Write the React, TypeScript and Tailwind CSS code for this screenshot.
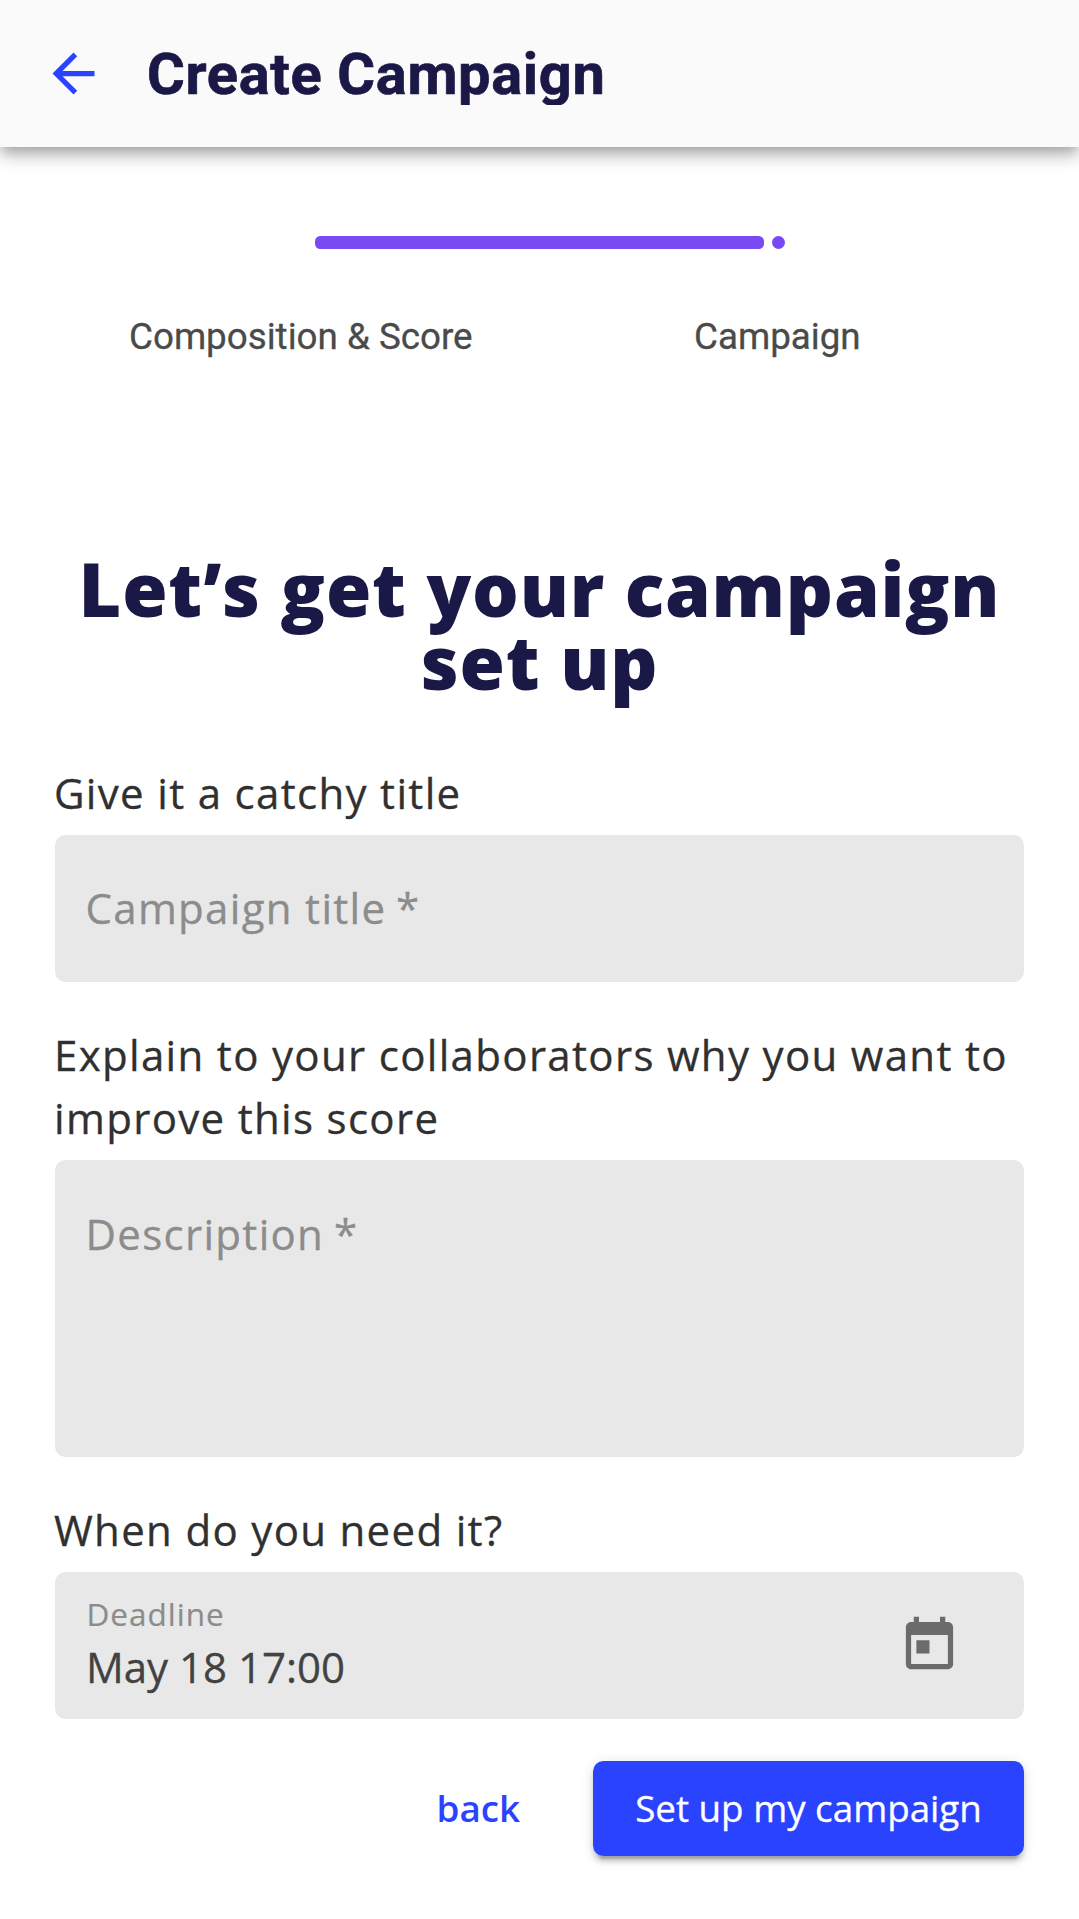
import React from "react";

function Question({ children }: { children: React.ReactNode }) {
  return (
    <p className="-ml-px text-[42px] leading-[63px] tracking-[1.325px] text-[#303030] [-webkit-text-stroke:0.3px_#303030]">
      {children}
    </p>
  );
}

function Placeholder({ children }: { children: React.ReactNode }) {
  return (
    <span className="text-[42px] leading-[63px] tracking-[1.3125px] whitespace-nowrap text-[#8c8c8c] [-webkit-text-stroke:0.3px_#8c8c8c]">
      {children}
      <span className="-ml-[1.2px] tracking-normal"> *</span>
    </span>
  );
}

export default function App() {
  return (
    <div className="flex h-[1919px] w-[1079px] flex-col overflow-hidden bg-white font-['Open_Sans',sans-serif]">
      <header className="relative z-10 flex h-[147px] shrink-0 items-center bg-[#fafafa] shadow-[0_5.25px_10.5px_-2.625px_rgba(0,0,0,0.2),0_10.5px_13.125px_rgba(0,0,0,0.14),0_2.625px_26.25px_rgba(0,0,0,0.12)]">
        <svg viewBox="0 0 24 24" className="ml-[42px] size-[63px] fill-[#2a43ff]">
          <path d="M20 11H7.83l5.59-5.59L12 4l-8 8 8 8 1.41-1.41L7.83 13H20v-2z" />
        </svg>
        <h1 className="ml-[42px] h-[63px] overflow-hidden pt-px font-['Roboto',sans-serif] text-[57.75px] leading-[63px] font-bold tracking-[0.68px] whitespace-nowrap text-[#1a1846] [-webkit-text-stroke:0.7px_#1a1846]">
          Create Campaign
        </h1>
      </header>

      <div className="mt-[89.25px] ml-[315px] flex h-[13.125px] shrink-0 gap-[7.875px]">
        <div className="w-[449px] rounded-[5.25px] bg-[#784af4]" />
        <div className="w-[13.125px] rounded-full bg-[#784af4]" />
      </div>
      <div className="mt-[59.75px] flex h-[55px] shrink-0 font-['Roboto',sans-serif] text-[36.75px] leading-[55px] whitespace-nowrap text-[#4a4a4a] [-webkit-text-stroke:0.3px_#4a4a4a]">
        <span className="ml-[129px] w-[565px]">Composition &amp; Score</span>
        <span>Campaign</span>
      </div>

      <main className="flex flex-col px-[55px]">
        <h2 className="mt-[188px] mb-px text-center text-[73.5px] leading-[73px] font-extrabold tracking-[0.75px] text-[#1a1846]">
          Let’s get your campaign
          <br />
          set up
        </h2>

        <div className="mt-[62px]">
          <Question>Give it a catchy title</Question>
        </div>
        <div className="mt-[10.5px] flex h-[147px] items-center rounded-[10.5px] bg-[#e8e8e8] px-[30.5px] pb-[2px]">
          <Placeholder>Campaign title</Placeholder>
        </div>

        <div className="mt-[41px] mb-px">
          <Question>
            Explain to your collaborators why you want to improve this score
          </Question>
        </div>
        <div className="mt-[10.5px] flex h-[296.6px] items-start rounded-[10.5px] bg-[#e8e8e8] px-[30.5px] pt-[42px]">
          <Placeholder>Description</Placeholder>
        </div>

        <div className="mt-[41px] mb-px">
          <Question>When do you need it?</Question>
        </div>
        <div className="mt-[10.5px] flex h-[147px] items-center justify-between rounded-[10.5px] bg-[#e8e8e8] pr-[63px] pl-[31px]">
          <div className="flex flex-col">
            <span className="pl-[0.5px] text-[31.5px] leading-[42px] tracking-[0.984px] text-[#8c8c8c] [-webkit-text-stroke:0.2px_#8c8c8c]">
              Deadline
            </span>
            <span className="text-[42px] leading-[63px] text-[#424242] [-webkit-text-stroke:0.3px_#424242]">
              May 18 17:00
            </span>
          </div>
          <svg viewBox="0 0 24 24" className="size-[63px] fill-[#6b6b6b]">
            <path d="M19 3h-1V1h-2v2H8V1H6v2H5c-1.11 0-1.99.9-1.99 2L3 19c0 1.1.89 2 2 2h14c1.1 0 2-.9 2-2V5c0-1.1-.9-2-2-2zm0 16H5V8h14v11zM7 10h5v5H7z" />
          </svg>
        </div>

        <div className="mt-[42px] flex h-[94.5px] items-center justify-end">
          <button className="mr-[73px] text-[36.75px] font-semibold text-[#2a43ff]">back</button>
          <button className="h-[94.5px] w-[431px] rounded-[10.5px] bg-[#2a43ff] text-[36.75px] font-medium text-white shadow-[0_7.875px_2.625px_-5.25px_rgba(0,0,0,0.2),0_5.25px_5.25px_rgba(0,0,0,0.14),0_2.625px_13.125px_rgba(0,0,0,0.12)] [-webkit-text-stroke:0.3px_#ffffff]">
            Set up my campaign
          </button>
        </div>
      </main>
    </div>
  );
}
